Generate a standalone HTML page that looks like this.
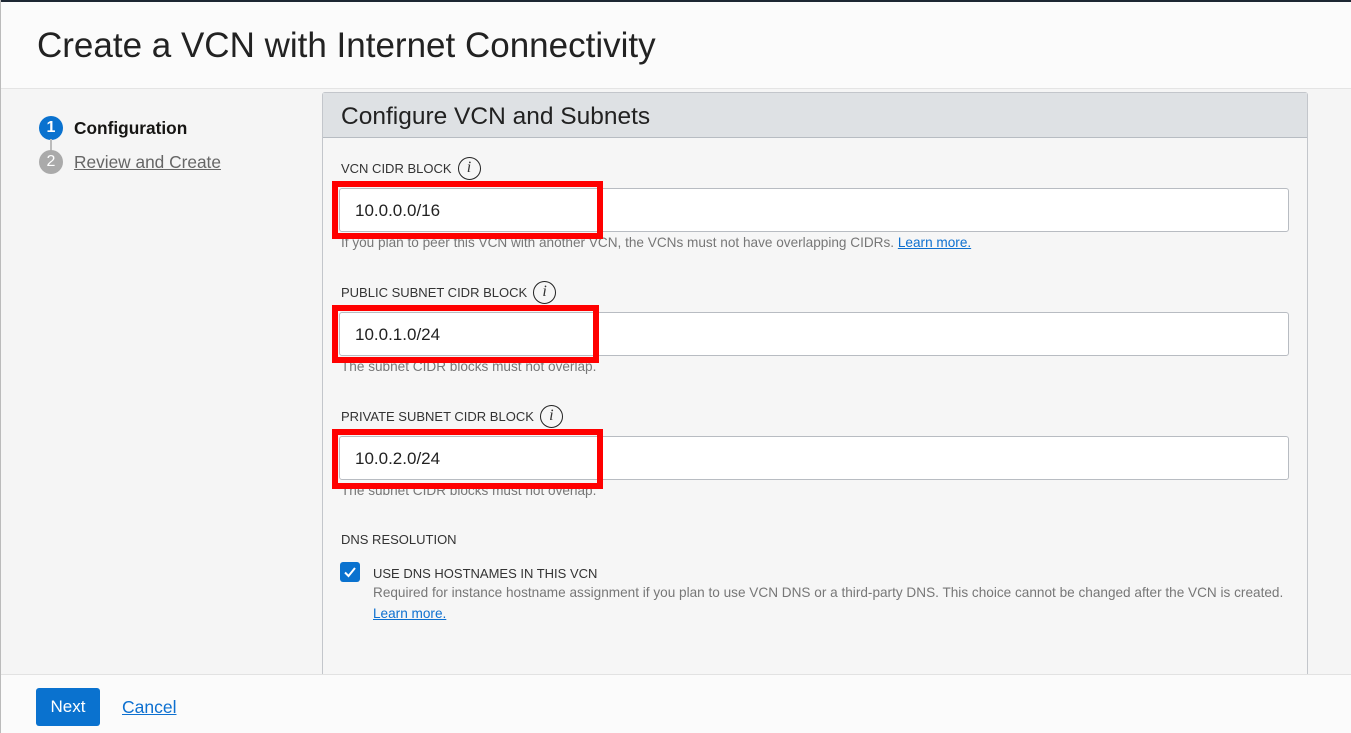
<!DOCTYPE html>
<html><head><meta charset="utf-8"><style>
*{box-sizing:border-box;margin:0;padding:0}
body{width:1351px;height:733px;overflow:hidden;background:#f5f5f5;font-family:"Liberation Sans",Arial,sans-serif;position:relative;color:#161513}
.top{position:absolute;left:0;top:0;width:1351px;height:2px;background:#1d2733}
.lb{position:absolute;left:0;top:0;width:1px;height:733px;background:#bbb}
.hdr{position:absolute;left:1px;top:2px;width:1350px;height:87px;background:#fbfbfb;border-bottom:1px solid #e4e4e4}
.hdr h1{position:absolute;left:36px;top:24px;font-weight:normal;font-size:35px;color:#222}
.step{position:absolute;left:39px;font-size:17.3px;display:flex;align-items:center}
.step .n{width:24px;height:24px;border-radius:50%;color:#fff;font-size:16px;text-align:center;line-height:24px;margin-right:11px}
.vl{position:absolute;left:50px;top:139px;width:2px;height:14px;background:#bbb}
.panel{position:absolute;left:322px;top:92px;width:986px;height:590px;border:1px solid #c3c6cb;border-radius:3px 3px 0 0;background:#f6f6f6}
.ph{height:45px;background:#dee1e4;border-bottom:1px solid #b7bcc2;font-size:24.5px;padding:10px 0 0 18px;color:#222}
.lab{position:absolute;left:341px;font-size:13px;color:#333;display:flex;align-items:center}
.i{display:inline-block;width:23px;height:23px;border:1.5px solid #222;border-radius:50%;text-align:center;font-family:"Liberation Serif",serif;font-style:italic;font-size:16px;line-height:20px;margin-left:6px}
.inp{position:absolute;left:339px;width:950px;height:44px;background:#fff;border:1px solid #b8bcc2;border-radius:3px;font-size:17px;padding:12px 0 0 15px;color:#222}
.help{position:absolute;left:341px;font-size:13.6px;color:#777}
.red{position:absolute;border:6px solid #f00}
a{color:#0d70d0}
.foot{position:absolute;left:1px;top:674px;width:1350px;height:59px;background:#fbfbfb;border-top:1px solid #e2e2e2}
.btn{position:absolute;left:36px;top:688px;width:64px;height:38px;background:#0a72cf;border-radius:3px;color:#fff;font-size:17px;text-align:center;line-height:38px}
</style></head><body>
<div class="hdr"><h1>Create a VCN with Internet Connectivity</h1></div>
<div class="top"></div><div class="lb"></div>
<div class="step" style="top:116px;font-weight:bold"><span class="n" style="background:#0a72cf">1</span>Configuration</div>
<div class="vl"></div>
<div class="step" style="top:150px;color:#666"><span class="n" style="background:#aaa">2</span><u>Review and Create</u></div>
<div class="panel"><div class="ph">Configure VCN and Subnets</div></div>

<div class="lab" style="top:157px">VCN CIDR BLOCK<span class="i">i</span></div>
<div class="inp" style="top:188px">10.0.0.0/16</div>
<div class="help" style="top:235px">If you plan to peer this VCN with another VCN, the VCNs must not have overlapping CIDRs. <a href="#">Learn more.</a></div>
<div class="red" style="left:332px;top:181px;width:271px;height:58px"></div>

<div class="lab" style="top:281px">PUBLIC SUBNET CIDR BLOCK<span class="i">i</span></div>
<div class="inp" style="top:312px">10.0.1.0/24</div>
<div class="help" style="top:359px">The subnet CIDR blocks must not overlap.</div>
<div class="red" style="left:332px;top:305px;width:267px;height:58px"></div>

<div class="lab" style="top:405px">PRIVATE SUBNET CIDR BLOCK<span class="i">i</span></div>
<div class="inp" style="top:436px">10.0.2.0/24</div>
<div class="help" style="top:483px">The subnet CIDR blocks must not overlap.</div>
<div class="red" style="left:332px;top:429px;width:271px;height:60px"></div>

<div class="lab" style="top:532px">DNS RESOLUTION</div>
<div style="position:absolute;left:340px;top:562px;width:20px;height:20px;background:#0a72cf;border-radius:3px"><svg width="20" height="20" viewBox="0 0 20 20"><path d="M5 10.5l3.5 3.5L15 6" stroke="#fff" stroke-width="2" fill="none"/></svg></div>
<div class="lab" style="top:566px;left:373px">USE DNS HOSTNAMES IN THIS VCN</div>
<div class="help" style="top:585px;left:373px">Required for instance hostname assignment if you plan to use VCN DNS or a third-party DNS. This choice cannot be changed after the VCN is created.</div>
<div class="help" style="top:606px;left:373px"><a href="#">Learn more.</a></div>

<div class="foot"></div>
<div class="btn">Next</div>
<div style="position:absolute;left:122px;top:697px;font-size:17.5px"><a href="#">Cancel</a></div>
</body></html>
